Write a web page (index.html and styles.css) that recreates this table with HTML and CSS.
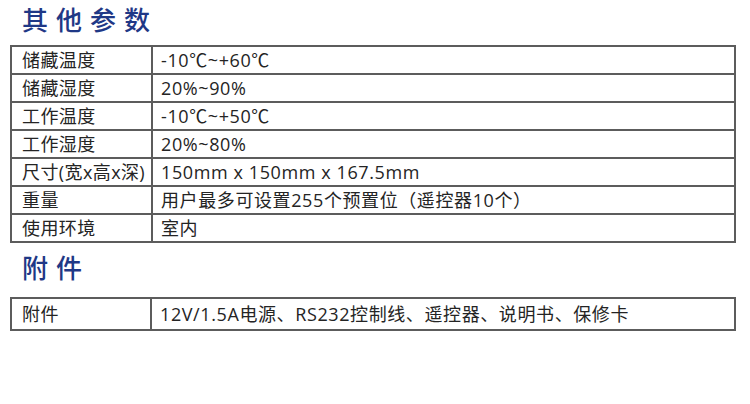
FILE: index.html
```html
<!DOCTYPE html>
<html>
<head>
<meta charset="utf-8">
<link rel="stylesheet" href="styles.css">
</head>
<body>
<div class="page">
  <h2 class="title">其他参数</h2>
  <table class="spec">
    <colgroup><col class="c1"><col></colgroup>
    <tr><td>储藏温度</td><td>-10℃~+60℃</td></tr>
    <tr><td>储藏湿度</td><td>20%~90%</td></tr>
    <tr><td>工作温度</td><td>-10℃~+50℃</td></tr>
    <tr><td>工作湿度</td><td>20%~80%</td></tr>
    <tr><td>尺寸(宽x高x深)</td><td>150mm x 150mm x 167.5mm</td></tr>
    <tr><td>重量</td><td>用户最多可设置255个预置位（遥控器10个）</td></tr>
    <tr><td>使用环境</td><td>室内</td></tr>
  </table>
  <h2 class="title title2">附件</h2>
  <table class="spec spec2">
    <colgroup><col class="c1b"><col></colgroup>
    <tr><td>附件</td><td>12V/1.5A电源、RS232控制线、遥控器、说明书、保修卡</td></tr>
  </table>
</div>
</body>
</html>
```

FILE: styles.css
```css
html, body {
  margin: 0;
  padding: 0;
  background: #ffffff;
}
.page {
  padding: 0 14px 0 10px;
  font-family: "Open Sans", "Noto Sans CJK SC", sans-serif;
  color: #242424;
}
.title {
  margin: 0;
  padding: 2px 0 0 12px;
  height: 45px;
  box-sizing: border-box;
  font-family: "Noto Sans CJK SC", sans-serif;
  font-size: 26px;
  font-weight: 500;
  line-height: 34px;
  letter-spacing: 8px;
  color: #1f3886;
}
.title2 {
  padding-top: 7px;
  height: 54px;
}
.spec {
  width: 726px;
  table-layout: fixed;
  border-collapse: collapse;
  border: 2px solid #5c5c5c;
}
.spec .c1 {
  width: 141px;
}
.spec .c1b {
  width: 140px;
}
.spec td {
  border: 2px solid #5c5c5c;
  height: 26px;
  padding: 0 0 0 8px;
  font-size: 18px;
  line-height: 26px;
  letter-spacing: 0.6px;
  white-space: nowrap;
}
.spec td:first-child {
  padding-left: 10px;
  letter-spacing: 0.4px;
}
.spec2 td {
  height: 30px;
}
```
